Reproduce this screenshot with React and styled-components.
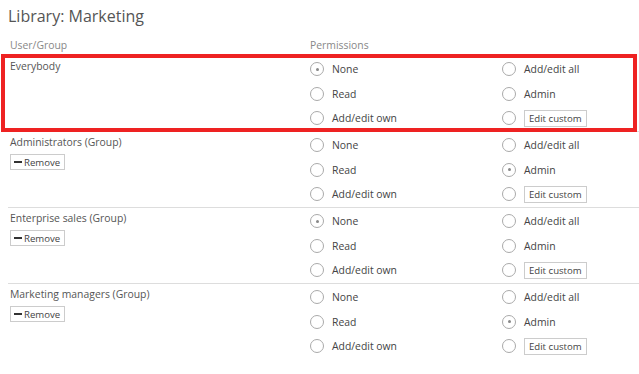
import styled, { createGlobalStyle } from "styled-components";

const GlobalStyle = createGlobalStyle`
  html, body {
    margin: 0;
    padding: 0;
    background: #fff;
    overflow: hidden;
  }
  body {
    font-family: "Open Sans", "Liberation Sans", sans-serif;
    color: #555;
  }
`;

const ROWS = [
  { name: "Everybody", value: "none", removable: false, highlighted: true },
  { name: "Administrators (Group)", value: "admin", removable: true },
  { name: "Enterprise sales (Group)", value: "none", removable: true },
  { name: "Marketing managers (Group)", value: "admin", removable: true },
];

const OPTIONS_LEFT = [
  { value: "none", label: "None" },
  { value: "read", label: "Read" },
  { value: "own", label: "Add/edit own" },
];

const OPTIONS_RIGHT = [
  { value: "all", label: "Add/edit all" },
  { value: "admin", label: "Admin" },
  { value: "custom", label: "Edit custom", button: true },
];

export default function App() {
  return (
    <Page>
      <GlobalStyle />
      <Title>Library: Marketing</Title>
      <HeaderRow>
        <HeaderCell>User/Group</HeaderCell>
        <HeaderCell>Permissions</HeaderCell>
      </HeaderRow>
      {ROWS.map((row) => (
        <Row key={row.name} highlighted={row.highlighted}>
          <NameCell>
            <Name>{row.name}</Name>
            {row.removable && (
              <SmallButton>
                <MinusIcon />
                Remove
              </SmallButton>
            )}
          </NameCell>
          <Permissions>
            <OptionColumn>
              {OPTIONS_LEFT.map((opt) => (
                <Option key={opt.value}>
                  <Radio checked={row.value === opt.value} />
                  <OptionLabel>{opt.label}</OptionLabel>
                </Option>
              ))}
            </OptionColumn>
            <OptionColumn>
              {OPTIONS_RIGHT.map((opt) => (
                <Option key={opt.value}>
                  <Radio checked={row.value === opt.value} />
                  {opt.button ? (
                    <SmallButton>{opt.label}</SmallButton>
                  ) : (
                    <OptionLabel>{opt.label}</OptionLabel>
                  )}
                </Option>
              ))}
            </OptionColumn>
          </Permissions>
        </Row>
      ))}
    </Page>
  );
}

const Page = styled.div`
  padding: 4px 0 0 8px;
  width: 631px;
`;

const Title = styled.h1`
  margin: 0 0 9px;
  font-size: 16px;
  line-height: 24px;
  font-weight: 400;
  color: #555;
`;

const HeaderRow = styled.div`
  display: grid;
  grid-template-columns: 302px 1fr;
  padding-bottom: 3px;
`;

const HeaderCell = styled.div`
  padding-left: 2px;
  font-size: 10.4px;
  line-height: 16px;
  color: #888;

  & + & {
    padding-left: 0;
  }
`;

const Row = styled.div`
  position: relative;
  display: grid;
  grid-template-columns: 302px 1fr;
  height: 75px;
  border-bottom: 1px solid #ddd;

  &:last-child {
    border-bottom-color: transparent;
  }

  &::after {
    content: "";
    display: ${({ highlighted }) => (highlighted ? "block" : "none")};
    position: absolute;
    top: -2px;
    left: -7px;
    right: 2px;
    bottom: -1px;
    border: 4px solid #ee2222;
    pointer-events: none;
  }
`;

const NameCell = styled.div`
  padding: 2px 0 0 2px;
  display: flex;
  flex-direction: column;
  align-items: flex-start;
`;

const Name = styled.div`
  font-size: 10.4px;
  line-height: 16px;
  color: #555;
`;

const SmallButton = styled.button`
  display: inline-flex;
  align-items: center;
  gap: 2px;
  margin: 0;
  padding: 0 4px;
  height: 17px;
  border: 1px solid #ccc;
  background: #fff;
  font-family: "Open Sans", "Liberation Sans", sans-serif;
  font-size: 9.6px;
  color: #444;
  cursor: pointer;

  ${NameCell} & {
    margin-top: 4px;
    height: 16px;
    padding: 0 4px 0 3px;
  }
`;

const MinusIcon = styled.span`
  display: inline-block;
  width: 8px;
  height: 2px;
  background: #333;
`;

const Permissions = styled.div`
  display: grid;
  grid-template-columns: 192px 1fr;
  padding-top: 1px;
`;

const OptionColumn = styled.div`
  display: flex;
  flex-direction: column;
`;

const Option = styled.label`
  display: flex;
  align-items: center;
  height: 24.5px;
  gap: 8px;
  cursor: pointer;
`;

const Radio = styled.span`
  position: relative;
  flex: none;
  width: 12px;
  height: 12px;
  border: 1px solid #aaa;
  border-radius: 50%;
  background: #fff;

  &::after {
    content: "";
    display: ${({ checked }) => (checked ? "block" : "none")};
    position: absolute;
    top: 50%;
    left: 50%;
    width: 3px;
    height: 3px;
    margin: -1.5px 0 0 -1.5px;
    border-radius: 50%;
    background: #888;
  }
`;

const OptionLabel = styled.span`
  font-size: 10.4px;
  color: #444;
`;
